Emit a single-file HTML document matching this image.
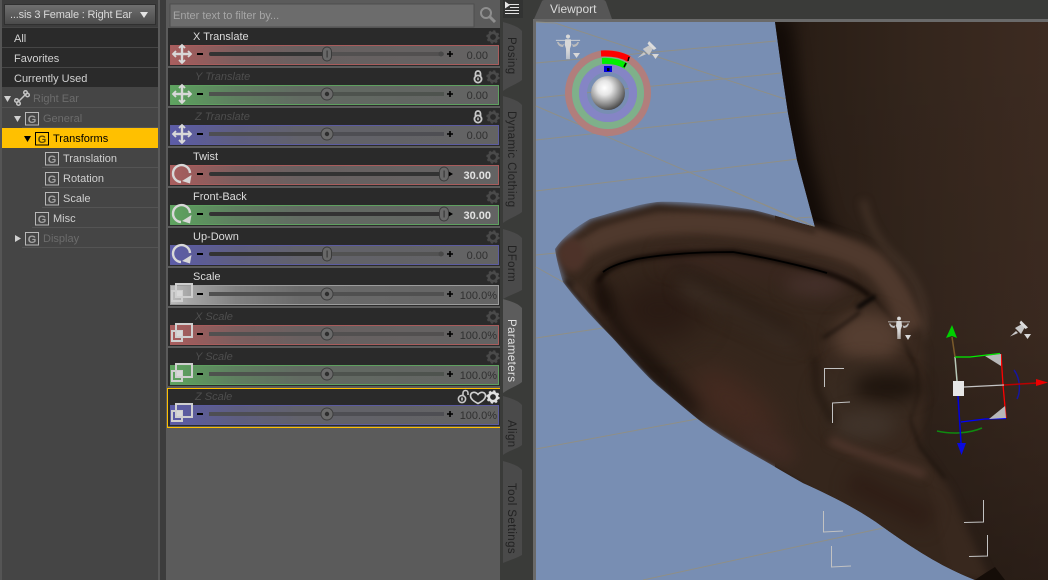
<!DOCTYPE html>
<html><head><meta charset="utf-8"><style>
html,body{margin:0;padding:0;background:#3a3b39;width:1048px;height:580px;overflow:hidden}
svg{display:block;font-family:"Liberation Sans",sans-serif;font-size:11px}
</style></head><body>
<svg width="1048" height="580" viewBox="0 0 1048 580" xmlns="http://www.w3.org/2000/svg">
<defs>
<linearGradient id="gr" x1="0" x2="1" y1="0" y2="0"><stop offset="0" stop-color="#a85f5f"/><stop offset=".06" stop-color="#9c5c5c"/><stop offset=".2" stop-color="#7c5e5e"/><stop offset=".4" stop-color="#686060"/><stop offset="1" stop-color="#636363"/></linearGradient>
<linearGradient id="gg" x1="0" x2="1" y1="0" y2="0"><stop offset="0" stop-color="#5fa560"/><stop offset=".06" stop-color="#5c985e"/><stop offset=".2" stop-color="#5f7e60"/><stop offset=".4" stop-color="#626a62"/><stop offset="1" stop-color="#636363"/></linearGradient>
<linearGradient id="gb" x1="0" x2="1" y1="0" y2="0"><stop offset="0" stop-color="#5c5ca8"/><stop offset=".06" stop-color="#5c5c9c"/><stop offset=".2" stop-color="#5e5e80"/><stop offset=".4" stop-color="#62626a"/><stop offset="1" stop-color="#636363"/></linearGradient>
<linearGradient id="gw" x1="0" x2="1" y1="0" y2="0"><stop offset="0" stop-color="#bdbdbd"/><stop offset=".06" stop-color="#a4a4a4"/><stop offset=".2" stop-color="#808080"/><stop offset=".4" stop-color="#6a6a6a"/><stop offset="1" stop-color="#646464"/></linearGradient>
<linearGradient id="dd" x1="0" x2="0" y1="0" y2="1"><stop offset="0" stop-color="#707070"/><stop offset="1" stop-color="#4a4a4a"/></linearGradient>
<linearGradient id="head" x1="0" x2="1" y1="0" y2="0"><stop offset="0" stop-color="#1d140e"/><stop offset=".12" stop-color="#2a1e16"/><stop offset=".5" stop-color="#33251c"/><stop offset="1" stop-color="#3d2b21"/></linearGradient>
<linearGradient id="headv" x1="0" x2="0" y1="0" y2="1"><stop offset="0" stop-color="#000" stop-opacity="0"/><stop offset=".55" stop-color="#000" stop-opacity=".05"/><stop offset="1" stop-color="#000" stop-opacity=".3"/></linearGradient>
<radialGradient id="ball" cx=".4" cy=".35" r=".7"><stop offset="0" stop-color="#fff"/><stop offset=".3" stop-color="#e6e6e6"/><stop offset=".7" stop-color="#8a8a8a"/><stop offset="1" stop-color="#3e3e3e"/></radialGradient>
<filter id="b2" filterUnits="userSpaceOnUse" x="0" y="0" width="1048" height="580" color-interpolation-filters="sRGB"><feGaussianBlur stdDeviation="2"/></filter>
<filter id="b4" filterUnits="userSpaceOnUse" x="0" y="0" width="1048" height="580" color-interpolation-filters="sRGB"><feGaussianBlur stdDeviation="4"/></filter>
<filter id="b8" filterUnits="userSpaceOnUse" x="0" y="0" width="1048" height="580" color-interpolation-filters="sRGB"><feGaussianBlur stdDeviation="8"/></filter>
<filter id="b14" filterUnits="userSpaceOnUse" x="0" y="0" width="1048" height="580" color-interpolation-filters="sRGB"><feGaussianBlur stdDeviation="14"/></filter>
<clipPath id="sil"><path d="M555,249 C565,235 575,228 590,219 C620,210 640,204 657,202 C680,201 720,204 753,210 C775,215 795,222 815,227 L797,160 L788,113 L782,73 L775,22 L1048,22 L1048,580 L975,580 C950,570 925,557 883,527 C860,510 830,495 803,483 C780,470 760,458 740,447 C725,438 715,432 703,423 C690,413 675,400 657,385 C640,370 620,345 605,330 C590,315 575,298 563,282 C560,272 557,262 555,249 Z"/></clipPath>
<g id="move" fill="none" stroke="#d8d8d8" stroke-width="2.400"><path d="M-8,0H8M0,-8V8"/><path d="M-6,-3L-9,0L-6,3M6,-3L9,0L6,3M-3,-6L0,-9L3,-6M-3,6L0,9L3,6" stroke-width="1.800"/></g>
<g id="rot" fill="none" stroke="#d8d8d8" stroke-width="2.400"><path d="M-1,8A8.500,8.500 0 1 1 8,-1"/><path d="M9.500,1L8,9.500L0,7Z" fill="#d8d8d8" stroke="none"/></g>
<g id="scl" fill="none" stroke="#cfcfcf" stroke-width="2"><rect x="-7" y="-10" width="16" height="13"/><rect x="-11" y="-3" width="10" height="10"/><rect x="-6" y="-3" width="5" height="5" fill="#d8d8d8" stroke="none"/></g>
<g id="gear"><circle r="4.200" fill="none" stroke="currentColor" stroke-width="2.600"/><circle r="5.700" fill="none" stroke="currentColor" stroke-width="2" stroke-dasharray="2.200 2.280"/></g>
<g id="lock" fill="none" stroke="#c8c8c8" stroke-width="1.800"><path d="M-2.500,-1V-3.500A2.500,2.500 0 0 1 2.500,-3.500V-1"/><circle cx="0" cy="2" r="3.600"/><path d="M0,.6V3.200" stroke-width="1.500"/></g>
<g id="g"><rect x="0.500" y="0.500" width="13" height="12.500" fill="none" stroke="#b8b8b8"/><text x="7" y="11" text-anchor="middle" font-size="11" font-weight="bold" fill="#a4a4a4">G</text></g>
<g id="th"><rect x="-4.500" y="-7" width="9" height="14" rx="4.500" fill="#686868" stroke="#3a3a3a"/><rect x="-.5" y="-3.500" width="1.200" height="7" fill="#383838"/></g>
<g id="tc"><circle r="6" fill="#6a6a6a" stroke="#3e3e3e"/><circle r="2.200" fill="#2e2e2e"/></g>
<g id="fig" fill="#d8d8d8"><circle cx="0" cy="-9.500" r="1.900"/><path d="M-2.500,-7H2.500L3,-2L1.800,1.500L1.500,11H.3L0,3L-.3,11H-1.500L-1.800,1.500L-3,-2Z"/><path d="M-11,-6.500H11V-5.700H2V-5H-2V-5.700H-11Z"/><path d="M-10,-4.500C-9,-1 -7,0 -4.500,0L-3.500,-3L-5,-2C-7,-2.500 -8,-3 -8.500,-4.500ZM10,-4.500C9,-1 7,0 4.500,0L3.500,-3L5,-2C7,-2.500 8,-3 8.500,-4.500Z" fill="#bcbcbc"/></g>
<g id="pin" fill="#c8c8c8"><path d="M-9,7.500L-3,2L-1,4Z"/><path d="M-4,-1L3,-5L6,-2L2,5Z"/><path d="M2,-8.500L9,-1.500L6.500,0L.5,-6Z" fill="#dcdcdc"/></g>
</defs>

<!-- base -->
<rect width="1048" height="580" fill="#3a3b39"/>

<!-- left panel -->
<rect x="0" y="0" width="2" height="580" fill="#555"/>
<rect x="2" y="0" width="156" height="580" fill="#454545"/>
<rect x="158" y="0" width="2" height="580" fill="#5a5a5a"/>
<rect x="160" y="0" width="6" height="580" fill="#3c3c3c"/>
<rect x="2" y="0" width="156" height="27" fill="#3c3c3c"/>
<rect x="4.500" y="4.500" width="151" height="20" fill="url(#dd)" stroke="#303030"/>
<text x="10" y="18" fill="#d8d8d8" textLength="122">...sis 3 Female : Right Ear</text>
<path d="M140,12H148L144,18Z" fill="#e4e4e4"/>
<rect x="2" y="28" width="156" height="19" fill="#2a2a2a"/>
<rect x="2" y="48" width="156" height="19" fill="#2a2a2a"/>
<rect x="2" y="68" width="156" height="19" fill="#2a2a2a"/>
<text x="14" y="42" fill="#d2d2d2">All</text>
<text x="14" y="62" fill="#d2d2d2">Favorites</text>
<text x="14" y="82" fill="#d2d2d2">Currently Used</text>
<g fill="#545454"><rect x="2" y="107" width="156" height="1"/><rect x="22" y="127" width="136" height="1"/><rect x="42" y="167" width="116" height="1"/><rect x="42" y="187" width="116" height="1"/><rect x="42" y="207" width="116" height="1"/><rect x="32" y="227" width="126" height="1"/><rect x="22" y="247" width="136" height="1"/></g>
<rect x="2" y="128" width="156" height="20" fill="#ffc000"/>
<path d="M4,96H11L7.500,102Z" fill="#d0d0d0"/>
<g fill="none" stroke="#c4c4c4" stroke-width="1.500"><path d="M18,102L26,94"/><circle cx="16.500" cy="100.500" r="1.800"/><circle cx="18.500" cy="103.500" r="1.800"/><circle cx="25.500" cy="92.500" r="1.800"/><circle cx="27.500" cy="95" r="1.800"/></g>
<text x="33" y="102" fill="#6c6c6c">Right Ear</text>
<path d="M14,116H21L17.500,122Z" fill="#d0d0d0"/>
<use href="#g" x="25" y="112"/>
<text x="43" y="122" fill="#6c6c6c">General</text>
<path d="M24,136H31L27.500,142Z" fill="#000"/>
<g transform="translate(35,132)"><rect x=".5" y=".5" width="13" height="12.500" fill="none" stroke="#000"/><text x="7" y="11" text-anchor="middle" font-size="11" font-weight="bold" fill="#5e4a00">G</text></g>
<text x="53" y="142" fill="#000">Transforms</text>
<use href="#g" x="45" y="152"/><text x="63" y="162" fill="#cfcfcf">Translation</text>
<use href="#g" x="45" y="172"/><text x="63" y="182" fill="#cfcfcf">Rotation</text>
<use href="#g" x="45" y="192"/><text x="63" y="202" fill="#cfcfcf">Scale</text>
<use href="#g" x="35" y="212"/><text x="53" y="222" fill="#cfcfcf">Misc</text>
<path d="M15,235L21,238.500L15,242Z" fill="#d0d0d0"/>
<use href="#g" x="25" y="232"/><text x="43" y="242" fill="#6c6c6c">Display</text>

<!-- center panel -->
<rect x="166" y="0" width="334" height="580" fill="#5b5b5b"/>
<rect x="170" y="4" width="304" height="23" fill="#6c6c6c" stroke="#4e4e4e"/>
<text x="173" y="19" fill="#a6a6a6">Enter text to filter by...</text>
<g fill="none" stroke="#8e8e8e"><circle cx="486" cy="13" r="5" stroke-width="2"/><path d="M490,17L495,22" stroke-width="3"/></g>

<!-- row 1 -->
<rect x="168" y="28" width="332" height="38" fill="#2a2a2a"/>
<rect x="170.500" y="45.500" width="328" height="19" fill="url(#gr)" stroke="#a85c5c"/>
<rect x="209" y="52" width="235" height="4" rx="2" fill="#525050"/><rect x="209" y="52" width="118" height="4" rx="2" fill="#333"/><circle cx="441" cy="54" r="2.500" fill="#484848"/>
<use href="#th" x="327" y="54"/><use href="#move" x="182" y="54"/>
<rect x="197" y="53" width="6" height="2" fill="#000"/><path d="M447,53.200H453V54.800H447ZM449.200,51H450.800V57H449.200Z" fill="#000"/>
<text x="193" y="40" fill="#dcdcdc">X Translate</text><text x="488" y="59" text-anchor="end" fill="#303030">0.00</text>
<use href="#gear" x="493" y="37" color="#4a4a4a"/>
<!-- row 2 -->
<rect x="168" y="68" width="332" height="38" fill="#2a2a2a"/>
<rect x="170.500" y="85.500" width="328" height="19" fill="url(#gg)" stroke="#5fa060"/>
<rect x="209" y="92" width="235" height="4" fill="#4e534e"/>
<use href="#tc" x="327" y="94"/><use href="#move" x="182" y="94"/>
<rect x="197" y="93" width="6" height="2" fill="#000"/><path d="M447,93.200H453V94.800H447ZM449.200,91H450.800V97H449.200Z" fill="#000"/>
<text x="195" y="80" fill="#4e4e4e" font-style="italic">Y Translate</text><text x="488" y="99" text-anchor="end" fill="#303030">0.00</text>
<use href="#gear" x="493" y="77" color="#4a4a4a"/><use href="#lock" x="478" y="77"/>
<!-- row 3 -->
<rect x="168" y="108" width="332" height="38" fill="#2a2a2a"/>
<rect x="170.500" y="125.500" width="328" height="19" fill="url(#gb)" stroke="#5c5ca0"/>
<rect x="209" y="132" width="235" height="4" fill="#4e4e53"/>
<use href="#tc" x="327" y="134"/><use href="#move" x="182" y="134"/>
<rect x="197" y="133" width="6" height="2" fill="#000"/><path d="M447,133.200H453V134.800H447ZM449.200,131H450.800V137H449.200Z" fill="#000"/>
<text x="195" y="120" fill="#4e4e4e" font-style="italic">Z Translate</text><text x="488" y="139" text-anchor="end" fill="#303030">0.00</text>
<use href="#gear" x="493" y="117" color="#4a4a4a"/><use href="#lock" x="478" y="117"/>
<!-- row 4 -->
<rect x="168" y="148" width="332" height="38" fill="#2a2a2a"/>
<rect x="170.500" y="165.500" width="328" height="19" fill="url(#gr)" stroke="#a85c5c"/>
<rect x="209" y="172" width="235" height="4" rx="2" fill="#333"/>
<path d="M447,170.500L453,174L447,177.500Z" fill="#000"/><use href="#th" x="444" y="174"/><use href="#rot" x="182" y="174"/>
<rect x="197" y="173" width="6" height="2" fill="#000"/>
<text x="193" y="160" fill="#dcdcdc">Twist</text><text x="491" y="179" text-anchor="end" fill="#e2e2e2" font-weight="bold">30.00</text>
<use href="#gear" x="493" y="157" color="#4a4a4a"/>
<!-- row 5 -->
<rect x="168" y="188" width="332" height="38" fill="#2a2a2a"/>
<rect x="170.500" y="205.500" width="328" height="19" fill="url(#gg)" stroke="#5fa060"/>
<rect x="209" y="212" width="235" height="4" rx="2" fill="#333"/>
<path d="M447,210.500L453,214L447,217.500Z" fill="#000"/><use href="#th" x="444" y="214"/><use href="#rot" x="182" y="214"/>
<rect x="197" y="213" width="6" height="2" fill="#000"/>
<text x="193" y="200" fill="#dcdcdc">Front-Back</text><text x="491" y="219" text-anchor="end" fill="#e2e2e2" font-weight="bold">30.00</text>
<use href="#gear" x="493" y="197" color="#4a4a4a"/>
<!-- row 6 -->
<rect x="168" y="228" width="332" height="38" fill="#2a2a2a"/>
<rect x="170.500" y="245.500" width="328" height="19" fill="url(#gb)" stroke="#5c5ca0"/>
<rect x="209" y="252" width="235" height="4" rx="2" fill="#525252"/><rect x="209" y="252" width="118" height="4" rx="2" fill="#333"/><circle cx="441" cy="254" r="2.500" fill="#484848"/>
<use href="#th" x="327" y="254"/><use href="#rot" x="182" y="254"/>
<rect x="197" y="253" width="6" height="2" fill="#000"/><path d="M447,253.200H453V254.800H447ZM449.200,251H450.800V257H449.200Z" fill="#000"/>
<text x="193" y="240" fill="#dcdcdc">Up-Down</text><text x="488" y="259" text-anchor="end" fill="#303030">0.00</text>
<use href="#gear" x="493" y="237" color="#4a4a4a"/>
<!-- row 7 -->
<rect x="168" y="268" width="332" height="38" fill="#2a2a2a"/>
<rect x="170.500" y="285.500" width="328" height="19" fill="url(#gw)" stroke="#9c9c9c"/>
<rect x="209" y="292" width="235" height="4" fill="#505050"/>
<use href="#tc" x="327" y="294"/><use href="#scl" x="183" y="294"/>
<rect x="197" y="293" width="6" height="2" fill="#000"/><path d="M447,293.200H453V294.800H447ZM449.200,291H450.800V297H449.200Z" fill="#000"/>
<text x="193" y="280" fill="#dcdcdc">Scale</text><text x="497" y="299" text-anchor="end" fill="#303030">100.0%</text>
<use href="#gear" x="493" y="277" color="#4a4a4a"/>
<!-- row 8 -->
<rect x="168" y="308" width="332" height="38" fill="#2a2a2a"/>
<rect x="170.500" y="325.500" width="328" height="19" fill="url(#gr)" stroke="#a85c5c"/>
<rect x="209" y="332" width="235" height="4" fill="#525050"/>
<use href="#tc" x="327" y="334"/><use href="#scl" x="183" y="334"/>
<rect x="197" y="333" width="6" height="2" fill="#000"/><path d="M447,333.200H453V334.800H447ZM449.200,331H450.800V337H449.200Z" fill="#000"/>
<text x="195" y="320" fill="#4e4e4e" font-style="italic">X Scale</text><text x="497" y="339" text-anchor="end" fill="#303030">100.0%</text>
<use href="#gear" x="493" y="317" color="#4a4a4a"/>
<!-- row 9 -->
<rect x="168" y="348" width="332" height="38" fill="#2a2a2a"/>
<rect x="170.500" y="365.500" width="328" height="19" fill="url(#gg)" stroke="#5fa060"/>
<rect x="209" y="372" width="235" height="4" fill="#4e534e"/>
<use href="#tc" x="327" y="374"/><use href="#scl" x="183" y="374"/>
<rect x="197" y="373" width="6" height="2" fill="#000"/><path d="M447,373.200H453V374.800H447ZM449.200,371H450.800V377H449.200Z" fill="#000"/>
<text x="195" y="360" fill="#4e4e4e" font-style="italic">Y Scale</text><text x="497" y="379" text-anchor="end" fill="#303030">100.0%</text>
<use href="#gear" x="493" y="357" color="#4a4a4a"/>
<!-- row 10 -->
<rect x="168" y="388" width="332" height="38" fill="#2a2a2a"/>
<rect x="170.500" y="405.500" width="328" height="19" fill="url(#gb)" stroke="#5c5ca0"/>
<rect x="209" y="412" width="235" height="4" fill="#4e4e53"/>
<use href="#tc" x="327" y="414"/><use href="#scl" x="183" y="414"/>
<rect x="197" y="413" width="6" height="2" fill="#000"/><path d="M447,413.200H453V414.800H447ZM449.200,411H450.800V417H449.200Z" fill="#000"/>
<text x="195" y="400" fill="#4e4e4e" font-style="italic">Z Scale</text><text x="497" y="419" text-anchor="end" fill="#303030">100.0%</text>
<use href="#gear" x="493" y="397" color="#e0e0e0"/>
<path d="M478,394.500C475,391 470.500,392 470.500,396C470.500,399 474,401.500 478,403.500C482,401.500 485.500,399 485.500,396C485.500,392 481,391 478,394.500Z" fill="none" stroke="#d0d0d0" stroke-width="1.600"/>
<g fill="none" stroke="#c8c8c8" stroke-width="1.600"><circle cx="462" cy="399" r="3.600"/><path d="M463,395V393A2.500,2.500 0 0 1 468,393V395"/><path d="M462,397.500V400.500"/></g>
<path d="M500,388.500H167.500V427.500H500" fill="none" stroke="#ffc000"/>

<!-- tab column -->
<rect x="500" y="0" width="33" height="580" fill="#3a3b39"/>
<rect x="503" y="0" width="20" height="18" fill="#323332"/>
<path d="M505,1.500L510,5L505,8.500Z" fill="#e8e8e8"/>
<path d="M506,4.500H519M510,7.500H519M505,10.500H519M505,13.500H519" stroke="#e4e4e4" stroke-width="1"/>
<g fill="#4a4a4a">
<path d="M503,22C510,24 518,26 522,31V80C517,84 510,86 503,91Z"/>
<path d="M503,96C510,98 518,100 522,105V212C517,216 510,218 503,223Z"/>
<path d="M503,229C510,231 518,233 522,238V290C517,293 510,295 503,299Z"/>
<path d="M503,396C510,398 518,400 522,405V445C517,449 510,450 503,455Z"/>
<path d="M503,461C510,463 518,465 522,470V555C517,558 510,560 503,563V461Z"/>
</g>
<path d="M503,299C510,301 518,303 522,308V382C517,386 510,388 503,393Z" fill="#5c5c5c"/>
<g font-size="11.500" fill="#222">
<text transform="translate(508,37) rotate(90)" letter-spacing=".4">Posing</text>
<text transform="translate(508,111) rotate(90)" letter-spacing=".4">Dynamic Clothing</text>
<text transform="translate(508,245) rotate(90)" letter-spacing=".4">DForm</text>
<text transform="translate(508,319) rotate(90)" letter-spacing=".4" fill="#e0e0e0">Parameters</text>
<text transform="translate(508,420) rotate(90)" letter-spacing=".4">Align</text>
<text transform="translate(508,483) rotate(90)" letter-spacing=".4">Tool Settings</text>
</g>

<!-- top bar + viewport frame -->
<rect x="530" y="0" width="518" height="19" fill="#3a3b39"/>
<path d="M534,19L542,1C543,0 544,0 546,0H602C604,0 605,0 606,2L612,19Z" fill="#565656"/>
<text x="550" y="13" fill="#dadada" font-size="12">Viewport</text>
<rect x="533" y="19" width="515" height="3" fill="#6a6a6a"/>
<rect x="533" y="19" width="3" height="561" fill="#6a6a6a"/>
<rect x="536" y="22" width="512" height="558" fill="#788eb3"/>

<!-- grid lines -->
<g stroke="#8f8f86" stroke-width="1" fill="none">
<path d="M536,63L776,41"/><path d="M536,98L781,73"/><path d="M536,22L555,23L785,99"/><path d="M536,140L787,112"/><path d="M536,191L798,159"/><path d="M536,106L807,223"/><path d="M797,218L813,217"/><path d="M730,190L815,227"/><path d="M536,255L556,253"/><path d="M536,267L563,282"/><path d="M536,338L603,328"/><path d="M536,449L697,419"/><path d="M643,580L883,528"/>
</g>

<!-- head & ear -->
<g clip-path="url(#sil)">
<rect x="775" y="22" width="273" height="558" fill="url(#head)"/>
<rect x="775" y="22" width="273" height="558" fill="url(#headv)"/>
<path d="M775,22L788,113L797,160L815,227L840,260" fill="none" stroke="#120b07" stroke-width="28" filter="url(#b8)"/>
<path d="M863,200C868,225 880,245 900,262C920,285 930,310 922,340" fill="none" stroke="#46352a" stroke-width="7" filter="url(#b4)" opacity=".8"/>
<!-- ear bulk -->
<path d="M555,249L590,219L657,202L753,210L815,227L865,245L905,290L925,350L925,400L920,447L950,490L990,580H900L803,483L703,423L605,330L563,282Z" fill="#38281e" filter="url(#b4)"/>
<!-- tragus shadow near head -->
<path d="M873,297L893,320L917,370L918,393L910,420L920,447L945,478" fill="none" stroke="#120b07" stroke-width="2" filter="url(#b2)" opacity=".8"/>
<!-- helix band -->
<path d="M566,262C590,232 640,222 703,222C770,226 830,240 872,262C892,280 905,305 912,330" fill="none" stroke="#4f392d" stroke-width="24" filter="url(#b4)"/>
<path d="M575,240L600,225L657,208L753,214L815,232" fill="none" stroke="#2e2018" stroke-width="5" filter="url(#b2)" opacity=".55"/>
<ellipse cx="572" cy="255" rx="13" ry="16" fill="#4d3229" filter="url(#b4)"/>
<path d="M566,280L605,325L657,380L703,420" fill="none" stroke="#2c1f17" stroke-width="6" filter="url(#b2)"/>
<path d="M575,285L610,325L660,375L710,415" fill="none" stroke="#3f2d23" stroke-width="9" filter="url(#b2)"/>
<!-- cavity -->
<path d="M600,277L637,260L733,252L827,273L867,293L857,307L823,337L815,357L817,390L833,423L860,443L890,457L925,475L950,580L860,510L803,483L703,423L650,375L620,330L600,300Z" fill="#35261c" filter="url(#b2)"/>
<path d="M600,285L620,330L660,375L700,410" fill="none" stroke="#130b07" stroke-width="13" filter="url(#b8)"/>
<ellipse cx="660" cy="310" rx="42" ry="30" fill="#2a1b14" filter="url(#b14)"/>
<path d="M660,258C710,262 770,268 840,290" fill="none" stroke="#3a271f" stroke-width="18" filter="url(#b8)"/>
<path d="M670,262L790,330" fill="none" stroke="#241913" stroke-width="10" filter="url(#b8)" opacity=".7"/>
<path d="M680,285C720,305 755,325 795,345" fill="none" stroke="#3e3128" stroke-width="10" filter="url(#b8)"/>
<ellipse cx="815" cy="285" rx="30" ry="11" fill="#44302a" filter="url(#b8)"/>
<path d="M710,310L815,345" fill="none" stroke="#2a1d15" stroke-width="8" filter="url(#b8)" opacity=".6"/>
<ellipse cx="735" cy="405" rx="52" ry="22" transform="rotate(38 735 405)" fill="#452a20" filter="url(#b14)"/>
<ellipse cx="770" cy="445" rx="30" ry="12" transform="rotate(30 770 445)" fill="#412a22" filter="url(#b8)"/>
<!-- tragus & concha -->
<ellipse cx="868" cy="338" rx="34" ry="26" fill="#553e31" filter="url(#b8)"/>
<ellipse cx="865" cy="400" rx="50" ry="40" fill="#382a20" filter="url(#b8)"/>
<ellipse cx="888" cy="387" rx="34" ry="14" fill="#1f150e" filter="url(#b8)"/>
<ellipse cx="865" cy="425" rx="30" ry="14" fill="#40332a" filter="url(#b8)"/>
<path d="M815,357L817,390L833,423" fill="none" stroke="#1d130c" stroke-width="5" filter="url(#b4)" opacity=".85"/>
<path d="M830,440C860,455 890,462 925,475" fill="none" stroke="#4d352b" stroke-width="9" filter="url(#b4)"/>
<path d="M850,480L930,520" fill="none" stroke="#2f1e16" stroke-width="24" filter="url(#b8)"/>
<path d="M860,312C848,322 835,330 823,338" fill="none" stroke="#0e0805" stroke-width="2" filter="url(#b2)"/>
<path d="M857,308L875,296" fill="none" stroke="#000" stroke-width="4" filter="url(#b2)"/>
<!-- fold -->
<path d="M598,283C603,268 622,263 637,259C665,254 700,252 733,252C770,258 810,268 827,273C845,279 860,287 870,296" fill="none" stroke="#120a06" stroke-width="5" filter="url(#b2)"/>
<path d="M603,272C612,265 625,262 637,259C665,254 700,252 733,252C770,258 810,268 827,273" fill="none" stroke="#000" stroke-width="1.800"/>
<path d="M598,280L606,312" fill="none" stroke="#1a0f0a" stroke-width="6" filter="url(#b4)"/>
</g>
<path d="M975,580C982,575 990,570 995,567L1005,580Z" fill="#150d08"/>

<!-- markers -->
<g fill="none" stroke="#c2c2c2" stroke-width="1">
<path d="M824.500,387V368.500H844"/><path d="M832.500,423V403L850,402"/>
<path d="M823.500,511V532L843,531"/><path d="M831.500,546V567L851,566"/>
<path d="M983.500,500V522L964,522.500"/><path d="M987.500,535V556L969,556.500"/>
</g>

<!-- navigator -->
<use href="#fig" transform="translate(568,47) scale(1.100)"/><path d="M573,53H580L576.500,58Z" fill="#d8d8d8"/>
<use href="#pin" transform="translate(647,50) scale(1.050)"/><path d="M652,54H659L655.500,59Z" fill="#d8d8d8"/>
<circle cx="608" cy="93" r="39.500" fill="none" stroke="#b17e7c" stroke-width="7"/>
<circle cx="608" cy="93" r="32.500" fill="none" stroke="#7fb08a" stroke-width="7"/>
<circle cx="608" cy="93" r="25" fill="none" stroke="#8585c5" stroke-width="8"/>
<circle cx="608" cy="93" r="17" fill="url(#ball)"/>
<path d="M601,53.500C612,53 622,55 629,59" fill="none" stroke="#f00" stroke-width="6"/>
<path d="M602,61C610,60.500 619,62 626,66" fill="none" stroke="#0e0" stroke-width="6"/>
<path d="M629,57L628,61M626,63L624,67" stroke="#000" stroke-width="1.500"/>
<rect x="604" y="66" width="8" height="6" fill="#00d"/><rect x="607" y="68" width="2.500" height="3" fill="#000"/>

<!-- gizmo -->
<use href="#fig" x="899" y="328"/><path d="M905,335H911L908,340Z" fill="#d8d8d8"/>
<use href="#pin" x="1019" y="329"/><path d="M1024,334H1031L1027.500,339Z" fill="#d8d8d8"/>
<path d="M1014,370C1020,378 1021,391 1017,399" fill="none" stroke="#1616a0" stroke-width="1.500"/>
<path d="M937,431C950,434 968,434 982,428" fill="none" stroke="#0f8a0f" stroke-width="1.500"/>
<path d="M952,337L955,357" stroke="#7a5a2a" stroke-width="1.500"/>
<path d="M952,325L957,338L952,336L946,338Z" fill="#00d000"/>
<path d="M955,357L957,381" stroke="#b8c8b8" stroke-width="1.500"/>
<path d="M955,357H970L1000,353.500" fill="none" stroke="#0e0" stroke-width="1.300"/>
<path d="M1001,354L1003,385L1006,418" fill="none" stroke="#f00" stroke-width="1.300"/>
<path d="M1006,418.500L985,419L961,422" fill="none" stroke="#00f" stroke-width="1.300"/>
<path d="M958,396L961,443" stroke="#0000e0" stroke-width="1.500"/>
<path d="M985,356L1001,354V366Z" fill="#b8b8b8"/><path d="M1005,406L1006,418L989,419Z" fill="#b8b8b8"/>
<path d="M964,387L1004,385" stroke="#c4c4c4" stroke-width="1.300"/>
<path d="M1004,385L1037,383" stroke="#b00" stroke-width="1.500"/>
<path d="M1036,379L1048,382.500L1036,386Z" fill="#e00"/>
<path d="M957,443H966L961.500,455Z" fill="#0a0ae0"/>
<rect x="953" y="381" width="11" height="15" fill="#e6e6e6"/>
</svg>
</body></html>
